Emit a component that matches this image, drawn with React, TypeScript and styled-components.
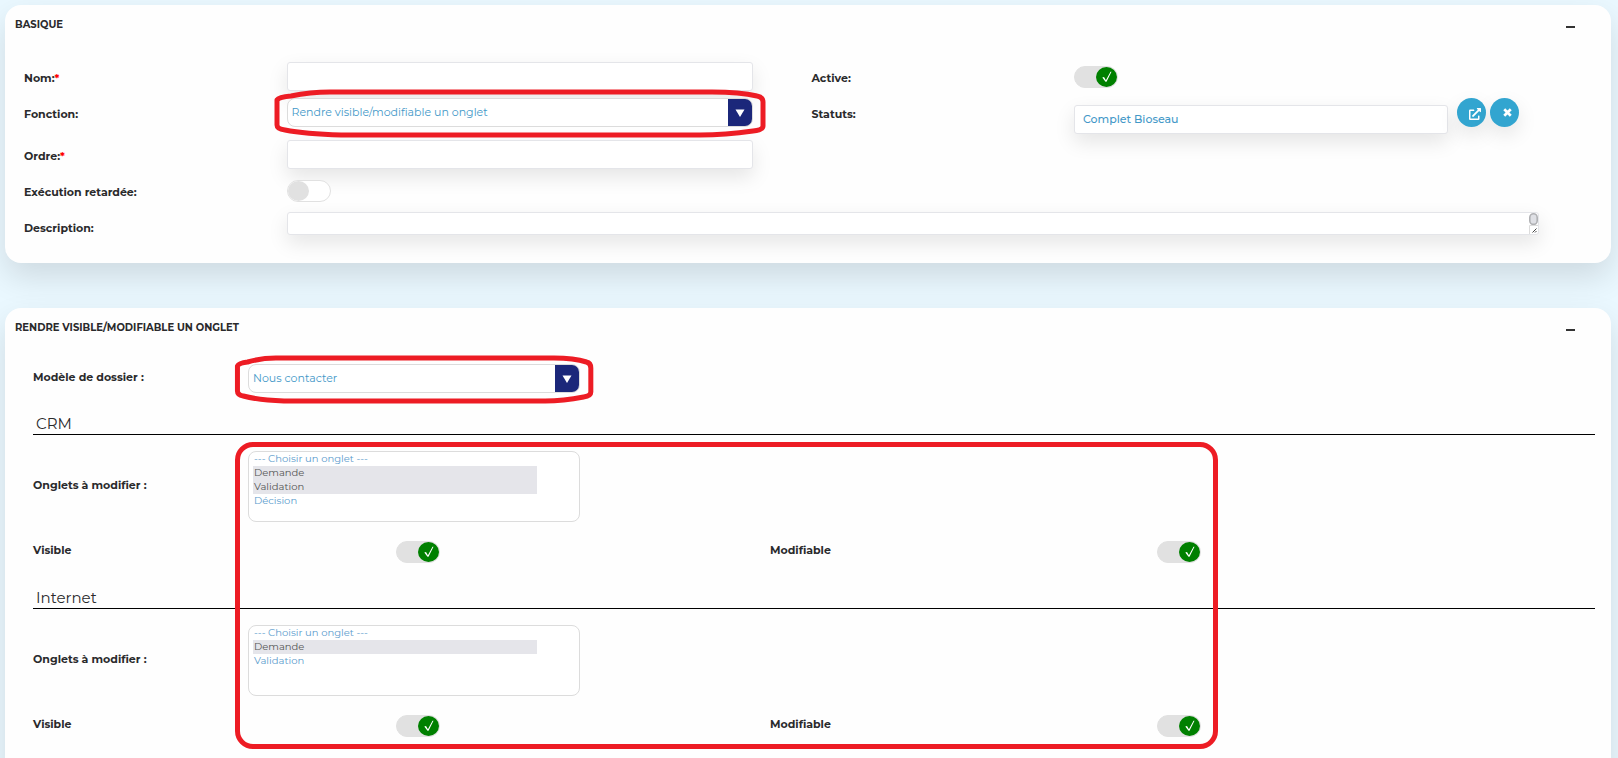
import React, { useId } from 'react';
import styled, { createGlobalStyle } from 'styled-components';
import { FaExternalLinkAlt } from 'react-icons/fa';

const GlobalStyle = createGlobalStyle`
  *, *::before, *::after { box-sizing: border-box; }
  html { scrollbar-width: none; }
  body {
    margin: 0;
    background: #eaf8ff;
    color: #2a2a2c;
    font-family: Montserrat, Inter, "Liberation Sans", sans-serif;
    font-size: 11px;
  }
`;

const Page = styled.main`
  display: flex;
  flex-direction: column;
  gap: 45px;
  padding: 5px 7px 5px 5px;
`;

const Card = styled.section`
  background: #fefefe;
  border-radius: 16px;
  box-shadow: 0 14px 32px rgba(0, 0, 0, 0.12);
`;

const CardHeader = styled.header`
  display: flex;
  align-items: center;
  justify-content: space-between;
  height: 38px;
  padding: 0 36px 0 10px;
`;

const CardTitle = styled.h2`
  margin: 0;
  font-size: 10px;
  font-weight: 700;
  text-transform: uppercase;
`;

const CollapseButton = styled.button`
  display: flex;
  align-items: center;
  justify-content: center;
  width: 9px;
  height: 16px;
  margin-top: 6px;
  padding: 0;
  border: 0;
  background: none;

  &::before {
    content: '';
    width: 9px;
    height: 2px;
    background: #333;
  }
`;

const BasicGrid = styled.div`
  display: grid;
  grid-template-columns: 1fr 2fr 1fr 2fr;
  grid-template-rows: 36px 42px 36px 36px 36px;
  padding: 17px 12px 17px 19px;
`;

const Label = styled.label`
  font-size: 11px;
  font-weight: 700;
  line-height: 36px;
`;

const Required = styled.span`
  color: #f00;
`;

const Field = styled.div`
  display: flex;
  align-items: flex-start;
  min-width: 0;
  padding: 2px 59px 0 0;
`;

const WideField = styled(Field)`
  grid-column: 2 / -1;
  padding-right: 60px;
`;

const ToggleField = styled(Field)`
  padding-top: 6px;
`;

const StatusField = styled(Field)`
  padding-right: 80px;
`;

const RowSpacer = styled.div`
  grid-column: 3 / -1;
`;

const TextInput = styled.input`
  flex: 1;
  min-width: 0;
  height: 29px;
  padding: 0 8px 2px;
  border: 1px solid #e4e5e9;
  border-radius: 3px;
  outline: 0;
  background: #fff;
  box-shadow: 0 8px 20px rgba(0, 0, 0, 0.1);
  color: #4398c8;
  font-family: inherit;
  font-size: 11px;
  font-weight: 500;
`;

const StatusInput = styled(TextInput)`
  margin: 7px 9px 0 0;
`;

const RoundButton = styled.button`
  display: flex;
  align-items: center;
  justify-content: center;
  width: 29px;
  height: 29px;
  margin-right: 4px;
  padding: 2px 0 0 6px;
  border: 0;
  border-radius: 50%;
  background: #32a5d0;
  box-shadow: 0 8px 20px rgba(0, 0, 0, 0.1);
  color: #fff;

  &:last-child {
    margin-right: 0;
    padding-top: 0;
  }
`;

const TextAreaBox = styled.div`
  position: relative;
  display: flex;
  flex: 1;
`;

const TextArea = styled.textarea`
  flex: 1;
  height: 23px;
  padding: 0 12px 0 4px;
  border: 1px solid #e4e5e9;
  border-radius: 3px;
  outline: 0;
  background: #fff;
  box-shadow: 0 8px 20px rgba(0, 0, 0, 0.1);
  color: #4398c8;
  font-family: inherit;
  font-size: 11px;
  line-height: 20px;
  resize: none;
`;

const ScrollGrip = styled.svg`
  position: absolute;
  top: 1px;
  right: 1px;
  width: 9px;
  height: 21px;
  pointer-events: none;
`;

const ToggleBox = styled.span`
  display: inline-grid;
  width: 44px;
  height: 22px;

  & > * { grid-area: 1 / 1; }
`;

const ToggleInput = styled.input`
  appearance: none;
  width: 44px;
  height: 22px;
  margin: 0;
  border: 1px solid #e1e1e1;
  border-radius: 11px;
  background: #fff;

  &::before {
    content: '';
    display: block;
    width: 21px;
    height: 20px;
    border-radius: 50%;
    background: #e1e1e1;
  }

  &:checked { background: #e1e1e1; }
  &:checked::before {
    margin-left: auto;
    background: #008000;
  }
`;

const CheckMark = styled.svg`
  width: 10px;
  height: 12px;
  justify-self: end;
  align-self: center;
  margin-right: 6px;
  pointer-events: none;
`;

const SelectBox = styled.div`
  position: relative;
  flex: 1;
  max-width: 100%;
`;

const SelectInput = styled.select`
  appearance: none;
  display: block;
  width: 100%;
  height: 29px;
  padding: 0 28px 2px 4px;
  border: 1px solid #dcdcdc;
  border-radius: 8px;
  outline: 0;
  background: #fff;
  color: #4398c8;
  font-family: inherit;
  font-size: 11px;
`;

const SelectArrow = styled.span`
  position: absolute;
  top: 1px;
  right: 1px;
  bottom: 1px;
  display: flex;
  align-items: center;
  justify-content: center;
  width: 24px;
  border-radius: 0 7px 7px 0;
  background: #1b277a;
  pointer-events: none;
`;

const Outline = styled.svg`
  position: absolute;
  top: -9px;
  left: -12px;
  width: calc(100% + 25px);
  height: calc(100% + 20px);
  overflow: visible;
  pointer-events: none;
`;

const TabsBody = styled.div`
  padding: 13px 16px 40px 28px;
`;

const TabRow = styled.div`
  display: grid;
  grid-template-columns: 215px 332px;
`;

const ModelRow = styled(TabRow)`
  padding-top: 5px;
  margin-bottom: 21px;

  ${Label} { line-height: 26px; }
`;

const TabsGroup = styled.div`
  position: relative;
`;

const GroupOutline = styled.div`
  position: absolute;
  top: 28px;
  right: calc(28% - 60px);
  bottom: -11px;
  left: 202px;
  border: 5px solid #ed1c24;
  border-radius: 18px;
  pointer-events: none;
`;

const Channel = styled.section`
  & + & { margin-top: 24px; }

  ${Label} { line-height: 18px; }
`;

const ChannelTitle = styled.h3`
  margin: 0 0 16px;
  padding-left: 3px;
  border-bottom: 1px solid #000;
  font-size: 15px;
  font-weight: 400;
  line-height: 20px;
`;

const ListRow = styled(TabRow)`
  align-items: center;
  margin-bottom: 19px;

  ${Label} { padding-bottom: 4px; }
`;

const ListBox = styled.select`
  display: block;
  height: 71px;
  padding: 0 42px 0 4px;
  border: 1px solid #dcdcdc;
  border-radius: 8px;
  outline: 0;
  background: #fff;
  color: #5c9ccd;
  font-family: inherit;
  font-size: 10px;
  font-weight: 500;
  overflow: hidden;

  option {
    min-height: 14px;
    padding: 0 1px;
    line-height: 14px;
  }
  option:checked {
    background: #e5e5ea;
    color: #555;
  }
`;

const SwitchRow = styled.div`
  display: grid;
  grid-template-columns: 363fr 374fr 387fr 438fr;
  height: 23px;
`;

function Toggle({ id, on }: { id: string; on?: boolean }) {
  return (
    <ToggleBox>
      <ToggleInput type="checkbox" role="switch" id={id} defaultChecked={on} />
      {on && (
        <CheckMark viewBox="0 0 10 12" aria-hidden="true">
          <path d="M0.3 6.6L2 5.9L3.9 9.2L8.5 0.8H9.5L4.5 10.8H3.5Z" fill="#fff" />
        </CheckMark>
      )}
    </ToggleBox>
  );
}

function HighlightedSelect({ id, value }: { id: string; value: string }) {
  return (
    <SelectBox>
      <SelectInput id={id} defaultValue={value}>
        <option>{value}</option>
      </SelectInput>
      <SelectArrow>
        <svg width="10" height="8" viewBox="0 0 10 8" aria-hidden="true">
          <path d="M0.5 0.5h9L5 8z" fill="#fff" />
        </svg>
      </SelectArrow>
      <Outline viewBox="0 0 491 49" preserveAspectRatio="none" aria-hidden="true">
        <path
          d="M2 11Q4 8 16 7Q35 3 55 3H437Q465 3 482 7Q488 8 488 13V37Q488 41 478 42Q450 46 425 46H66Q30 45 10 41Q2 40 2 36Z"
          fill="none"
          stroke="#ed1c24"
          strokeWidth="5"
          strokeLinejoin="round"
          vectorEffect="non-scaling-stroke"
        />
      </Outline>
    </SelectBox>
  );
}

function ChannelTabs({ title, tabs, selected }: { title: string; tabs: string[]; selected: string[] }) {
  const id = useId();
  return (
    <Channel>
      <ChannelTitle>{title}</ChannelTitle>
      <ListRow>
        <Label htmlFor={`${id}-tabs`}>Onglets à modifier :</Label>
        <ListBox id={`${id}-tabs`} multiple defaultValue={selected}>
          <option value="">--- Choisir un onglet ---</option>
          {tabs.map((tab) => (
            <option key={tab} value={tab}>{tab}</option>
          ))}
        </ListBox>
      </ListRow>
      <SwitchRow>
        <Label htmlFor={`${id}-visible`}>Visible</Label>
        <Toggle id={`${id}-visible`} on />
        <Label htmlFor={`${id}-editable`}>Modifiable</Label>
        <Toggle id={`${id}-editable`} on />
      </SwitchRow>
    </Channel>
  );
}

function Header({ title }: { title: string }) {
  return (
    <CardHeader>
      <CardTitle>{title}</CardTitle>
      <CollapseButton type="button" aria-label="Réduire" />
    </CardHeader>
  );
}

export default function App() {
  return (
    <>
      <GlobalStyle />
      <Page>
        <Card>
          <Header title="Basique" />
          <BasicGrid>
            <Label htmlFor="name">Nom:<Required>*</Required></Label>
            <Field><TextInput id="name" type="text" /></Field>
            <Label htmlFor="active">Active:</Label>
            <ToggleField><Toggle id="active" on /></ToggleField>

            <Label htmlFor="function">Fonction:</Label>
            <Field><HighlightedSelect id="function" value="Rendre visible/modifiable un onglet" /></Field>
            <Label htmlFor="status">Statuts:</Label>
            <StatusField>
              <StatusInput id="status" type="text" defaultValue="Complet Bioseau" />
              <RoundButton type="button" aria-label="Ouvrir"><FaExternalLinkAlt size={12} /></RoundButton>
              <RoundButton type="button" aria-label="Effacer">
                <svg width="9" height="9" viewBox="0 0 8 8" aria-hidden="true">
                  <path d="M1.1 1.1 6.9 6.9M6.9 1.1 1.1 6.9" stroke="#fff" strokeWidth="2.4" />
                </svg>
              </RoundButton>
            </StatusField>

            <Label htmlFor="order">Ordre:<Required>*</Required></Label>
            <Field><TextInput id="order" type="text" /></Field>
            <RowSpacer />

            <Label htmlFor="delayed">Exécution retardée:</Label>
            <ToggleField><Toggle id="delayed" /></ToggleField>
            <RowSpacer />

            <Label htmlFor="description">Description:</Label>
            <WideField>
              <TextAreaBox>
                <TextArea id="description" rows={1} />
                <ScrollGrip viewBox="0 0 9 21" aria-hidden="true">
                  <rect x="0.8" y="0.8" width="7.4" height="10.6" rx="3.7" fill="#dfe0e5" stroke="#b0b1b4" strokeWidth="1.6" />
                  <path d="M0.5 21V12.5H9" fill="none" stroke="#dcdcdc" />
                  <path d="M3.5 19.5 7.5 15.5M6 19.5 7.5 18" stroke="#444" />
                </ScrollGrip>
              </TextAreaBox>
            </WideField>
          </BasicGrid>
        </Card>

        <Card>
          <Header title="Rendre visible/modifiable un onglet" />
          <TabsBody>
            <ModelRow>
              <Label htmlFor="model">Modèle de dossier :</Label>
              <HighlightedSelect id="model" value="Nous contacter" />
            </ModelRow>
            <TabsGroup>
              <ChannelTabs title="CRM" tabs={['Demande', 'Validation', 'Décision']} selected={['Demande', 'Validation']} />
              <ChannelTabs title="Internet" tabs={['Demande', 'Validation']} selected={['Demande']} />
              <GroupOutline />
            </TabsGroup>
          </TabsBody>
        </Card>
      </Page>
    </>
  );
}
